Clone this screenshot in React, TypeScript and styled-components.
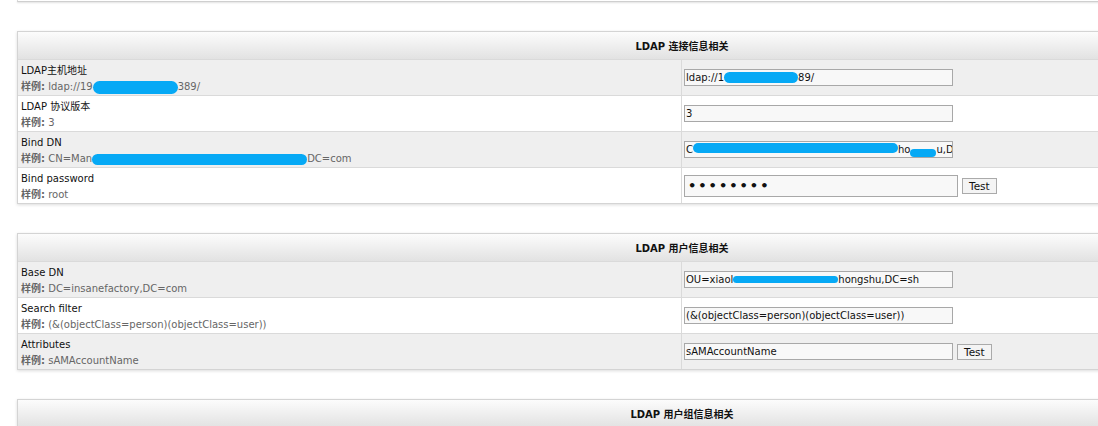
import React from "react";
import styled, { createGlobalStyle } from "styled-components";

const Global = createGlobalStyle`
  html, body { margin: 0; padding: 0; background: #fff; overflow: hidden; }
  body {
    font-family: "DejaVu Sans", "Noto Sans CJK SC", sans-serif;
    font-size: 10px;
    color: #111;
  }
`;

const Page = styled.div`
  padding: 0 0 0 17px;
  display: flex;
  flex-direction: column;
  gap: 29px;
`;

const TopStub = styled.div`
  width: 1328px;
  height: 1px;
  border-left: 1px solid #d8d8d8;
  border-bottom: 1px solid #cfcfcf;
  box-shadow: 0 1px 2px rgba(0, 0, 0, 0.12);
`;

const Panel = styled.section`
  width: 1328px;
  border: 1px solid #d4d4d4;
  box-shadow: 0 1px 3px rgba(0, 0, 0, 0.14);
  background: #fff;
`;

const Header = styled.div`
  height: 27px;
  display: flex;
  align-items: center;
  justify-content: center;
  font-weight: bold;
  font-size: 10px;
  color: #111;
  background: linear-gradient(#fcfcfc, #e2e2e2);
`;

const Row = styled.div<{ $alt: boolean }>`
  height: 36px;
  box-sizing: border-box;
  display: grid;
  grid-template-columns: 663px 1fr;
  border-top: 1px solid #dadada;
  background: ${(p) => (p.$alt ? "#efefef" : "#ffffff")};
`;

const LabelCell = styled.div`
  padding: 3px 3px 0;
  line-height: 16px;
  white-space: nowrap;
`;

const Title = styled.div`
  color: #111;
`;

const Sample = styled.div`
  color: #666;
  b {
    font-weight: bold;
    color: #666;
  }
`;

const ValueCell = styled.div`
  border-left: 1px solid #dadada;
  padding-left: 2px;
  display: flex;
  align-items: center;
  gap: 4px;
`;

const Field = styled.div<{ $w: number; $h: number }>`
  width: ${(p) => p.$w}px;
  height: ${(p) => p.$h}px;
  box-sizing: border-box;
  border: 1px solid #a8a8a8;
  background: #f8f8f8;
  padding: 0 1px;
  display: flex;
  align-items: center;
  overflow: hidden;
  white-space: nowrap;
  font-size: 10px;
  color: #111;
`;

const Dots = styled.span`
  font-size: 13px;
  letter-spacing: 2px;
  padding-left: 2px;
  font-weight: bold;
`;

const Button = styled.button`
  height: 16px;
  padding: 0 6px;
  border: 1px solid #aaaaaa;
  background: #f4f4f4;
  font-family: "DejaVu Sans", sans-serif;
  font-size: 10.5px;
  color: #111;
  line-height: 14px;
`;

const Blur = styled.span<{ $w: number; $h?: number; $dy?: number }>`
  display: inline-block;
  width: ${(p) => p.$w}px;
  height: ${(p) => p.$h ?? 12}px;
  border-radius: 7px;
  background: #06a9f5;
  vertical-align: middle;
  position: relative;
  top: ${(p) => p.$dy ?? 0}px;
  flex: none;
`;

type RowDef = {
  title: string;
  sample: React.ReactNode;
  value: React.ReactNode;
  kind?: "password" | "test";
};

const conn: RowDef[] = [
  {
    title: "LDAP主机地址",
    sample: (
      <>
        ldap://19<Blur $w={85} $h={13} />389/
      </>
    ),
    value: (
      <>
        ldap://1<Blur $w={74} $h={11} />89/
      </>
    ),
  },
  { title: "LDAP 协议版本", sample: "3", value: "3" },
  {
    title: "Bind DN",
    sample: (
      <>
        CN=Man<Blur $w={215} $h={11} />DC=com
      </>
    ),
    value: (
      <>
        C<Blur $w={205} $h={10} $dy={-2} />ho<Blur $w={26} $h={8} $dy={3} />u,D
      </>
    ),
  },
  { title: "Bind password", sample: "root", value: null, kind: "password" },
];

const user: RowDef[] = [
  {
    title: "Base DN",
    sample: "DC=insanefactory,DC=com",
    value: (
      <>
        OU=xiaol<Blur $w={105} $h={7} />hongshu,DC=sh
      </>
    ),
  },
  {
    title: "Search filter",
    sample: "(&(objectClass=person)(objectClass=user))",
    value: "(&(objectClass=person)(objectClass=user))",
  },
  {
    title: "Attributes",
    sample: "sAMAccountName",
    value: "sAMAccountName",
    kind: "test",
  },
];

function Rows({ rows }: { rows: RowDef[] }) {
  return (
    <>
      {rows.map((r, i) => (
        <Row key={r.title} $alt={i % 2 === 0}>
          <LabelCell>
            <Title>{r.title}</Title>
            <Sample>
              <b>样例:</b> {r.sample}
            </Sample>
          </LabelCell>
          <ValueCell>
            {r.kind === "password" ? (
              <>
                <Field $w={274} $h={22}>
                  <Dots>••••••••</Dots>
                </Field>
                <Button>Test</Button>
              </>
            ) : r.kind === "test" ? (
              <>
                <Field $w={269} $h={17}>
                  {r.value}
                </Field>
                <Button>Test</Button>
              </>
            ) : (
              <Field $w={269} $h={17}>
                {r.value}
              </Field>
            )}
          </ValueCell>
        </Row>
      ))}
    </>
  );
}

export default function App() {
  return (
    <>
      <Global />
      <Page>
        <TopStub />
        <Panel>
          <Header>LDAP 连接信息相关</Header>
          <Rows rows={conn} />
        </Panel>
        <Panel>
          <Header>LDAP 用户信息相关</Header>
          <Rows rows={user} />
        </Panel>
        <Panel>
          <Header>LDAP 用户组信息相关</Header>
        </Panel>
      </Page>
    </>
  );
}
